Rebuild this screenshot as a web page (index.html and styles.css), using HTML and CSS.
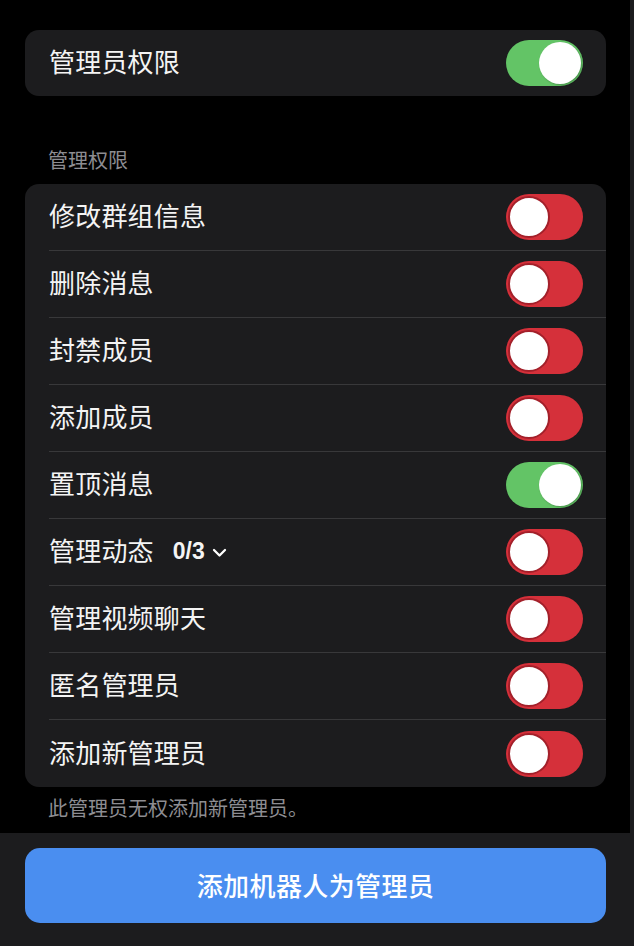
FILE: index.html
```html
<!DOCTYPE html>
<html lang="zh-CN">
<head>
  <meta charset="UTF-8">
  <meta name="viewport" content="width=device-width, initial-scale=1.0">
  <title>管理员权限</title>
  <link rel="stylesheet" href="styles.css">
</head>
<body>
  <div class="page">
    <main class="content">
      <div class="card">
        <div class="row">
          <span class="label">管理员权限</span>
          <span class="switch on"><span class="knob"></span></span>
        </div>
      </div>

      <div class="section-title">管理权限</div>
      <div class="card">
        <div class="row">
          <span class="label">修改群组信息</span>
          <span class="switch off"><span class="knob"></span></span>
        </div>
        <div class="row">
          <span class="label">删除消息</span>
          <span class="switch off"><span class="knob"></span></span>
        </div>
        <div class="row">
          <span class="label">封禁成员</span>
          <span class="switch off"><span class="knob"></span></span>
        </div>
        <div class="row">
          <span class="label">添加成员</span>
          <span class="switch off"><span class="knob"></span></span>
        </div>
        <div class="row">
          <span class="label">置顶消息</span>
          <span class="switch on"><span class="knob"></span></span>
        </div>
        <div class="row">
          <span class="label">管理动态
            <span class="count">0/3
              <svg class="chevron" width="15" height="10" viewBox="0 0 15 10"><path d="M2 2 L7.5 7.5 L13 2" fill="none" stroke="#fff" stroke-width="2.3" stroke-linecap="round" stroke-linejoin="round"/></svg>
            </span>
          </span>
          <span class="switch off"><span class="knob"></span></span>
        </div>
        <div class="row">
          <span class="label">管理视频聊天</span>
          <span class="switch off"><span class="knob"></span></span>
        </div>
        <div class="row">
          <span class="label">匿名管理员</span>
          <span class="switch off"><span class="knob"></span></span>
        </div>
        <div class="row">
          <span class="label">添加新管理员</span>
          <span class="switch off"><span class="knob"></span></span>
        </div>
      </div>
      <div class="section-note">此管理员无权添加新管理员。</div>
    </main>

    <footer class="bottom-bar">
      <button class="primary-button">添加机器人为管理员</button>
    </footer>
  </div>
</body>
</html>
```

FILE: styles.css
```css
body {
  margin: 0;
  padding: 0;
  background-color: #000;
  font-family: "Noto Sans CJK SC", "Noto Sans", sans-serif;
  color: #fff;
}

.page {
  width: 634px;
  height: 946px;
  display: flex;
  flex-direction: column;
  overflow: hidden;
}

.content {
  flex: 1;
  padding: 30px 24px 0 25px;
  border-right: 4px solid #1c1c1e; /* thin strip at right edge */
}

.card {
  background-color: #1c1c1e;
  border-radius: 14px;
  overflow: hidden;
}

.row {
  height: 67px;
  margin-left: 24px;
  padding-right: 23px;
  display: flex;
  align-items: center;
  justify-content: space-between;
  border-bottom: 1px solid #38383a;
  box-sizing: border-box;
}

.row:last-child {
  border-bottom: none;
}

.card:first-child .row {
  height: 66px;
}

.label {
  font-size: 26px;
  letter-spacing: 0.2px;
  color: #f4f4f4;
  display: flex;
  align-items: center;
  padding-bottom: 5px; /* CJK glyphs sit low, nudge up */
}

.count {
  font-family: "Liberation Sans", Arial, sans-serif;
  font-weight: bold;
  font-size: 23px;
  margin-left: 19px;
  display: flex;
  align-items: center;
  letter-spacing: 0;
  padding-top: 4px;
}

.chevron {
  margin-left: 7px;
  margin-top: 2px;
}

.switch {
  width: 77px;
  height: 46px;
  border-radius: 23px;
  display: flex;
  align-items: center;
  padding: 2px;
  box-sizing: border-box;
}

.switch.on {
  background-color: #63c466;
  justify-content: flex-end;
}

.switch.off {
  background-color: #d5303a;
  justify-content: flex-start;
}

.knob {
  width: 42px;
  height: 42px;
  border-radius: 50%;
  background-color: #fff;
  box-sizing: border-box;
}

.switch.off .knob {
  border: 2px solid #a3202a;
}

.switch.on .knob {
  box-shadow: 1px 1px 2px rgba(0, 0, 0, 0.25);
}

.section-title {
  font-size: 20px;
  color: #8d8d92;
  margin: 49px 0 9px 23px;
  line-height: 30px;
}

.section-note {
  font-size: 20px;
  color: #8d8d92;
  margin: 6px 0 0 23px;
  line-height: 30px;
}

.bottom-bar {
  height: 113px;
  background-color: #1c1c1e;
  padding: 15px 28px 0 25px;
  box-sizing: border-box;
}

.primary-button {
  width: 581px;
  height: 75px;
  border: none;
  border-radius: 15px;
  background-color: #4a8ef0;
  color: #fff;
  font-family: "Noto Sans CJK SC", sans-serif;
  font-size: 26px;
  font-weight: 500;
  letter-spacing: 0.4px;
  padding-bottom: 4px;
  cursor: pointer;
}
```
